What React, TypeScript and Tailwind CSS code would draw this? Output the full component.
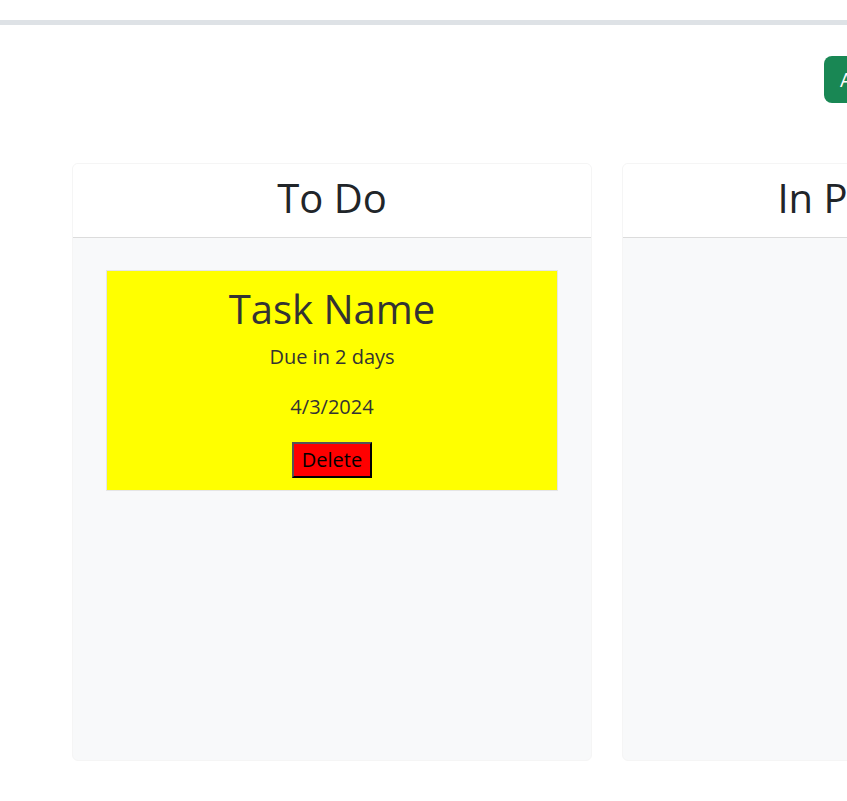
import React from 'react'

const COLUMNS = ['To Do', 'In Progress', 'Done']

function TaskCard() {
  return (
    <div className="flex flex-col items-center border border-[#e5e5e5] bg-[#ffff00] pt-[12px] pb-[12px] text-[#333333]">
      <h3 className="text-[40px] leading-[52px]">Task Name</h3>
      <p className="mt-[7px] text-[20px] leading-[30px]">Due in 2 days</p>
      <p className="mt-[20px] text-[20px] leading-[30px]">4/3/2024</p>
      <button className="mt-[20px] border-2 border-t-[#555555] border-l-[#555555] border-b-black border-r-black bg-[#ff0000] px-[8px] text-[20px] leading-[32px] text-black">
        Delete
      </button>
    </div>
  )
}

function Column({ title, children }: { title: string; children?: React.ReactNode }) {
  return (
    <div className="flex h-[598px] w-[520px] shrink-0 flex-col overflow-hidden rounded-[6px] border border-[#f5f5f5] bg-[#f8f9fa]">
      <div className="flex h-[74px] items-center justify-center border-b border-[#dcdcdc] bg-white pb-[5px]">
        <h2 className="text-[40px] leading-[48px] text-[#212529]">{title}</h2>
      </div>
      <div className="px-[33px] pt-[32px]">{children}</div>
    </div>
  )
}

export default function App() {
  return (
    <div className="min-h-screen w-full overflow-hidden bg-white" style={{ fontFamily: '"Open Sans", "Noto Sans", sans-serif' }}>
      <div className="h-[20px] border-b-[5px] border-[#dee2e6] box-content" />
      <div className="w-[1800px]">
        <div className="flex pl-[824px] pt-[31px]">
          <button className="rounded-[8px] bg-[#198754] px-[16px] text-[20px] leading-[47px] text-white">Add Task</button>
        </div>
        <div className="flex gap-[30px] pl-[72px] pt-[60px]">
          {COLUMNS.map((c, i) => (
            <Column key={c} title={c}>
              {i === 0 && <TaskCard />}
            </Column>
          ))}
        </div>
      </div>
    </div>
  )
}
